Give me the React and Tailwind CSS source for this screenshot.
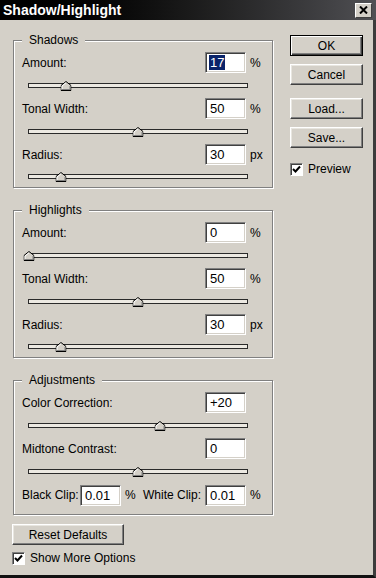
import React from "react";

const font = { fontFamily: '"Liberation Sans", Arial, sans-serif' };

const groups = [
  {
    title: "Shadows",
    rows: [
      { label: "Amount:", value: "17", unit: "%", pos: 17, selected: true },
      { label: "Tonal Width:", value: "50", unit: "%", pos: 50 },
      { label: "Radius:", value: "30", unit: "px", pos: 14.5 },
    ],
  },
  {
    title: "Highlights",
    rows: [
      { label: "Amount:", value: "0", unit: "%", pos: 0 },
      { label: "Tonal Width:", value: "50", unit: "%", pos: 50 },
      { label: "Radius:", value: "30", unit: "px", pos: 14.5 },
    ],
  },
];

const adjustments = [
  { label: "Color Correction:", value: "+20", unit: "", pos: 60 },
  { label: "Midtone Contrast:", value: "0", unit: "", pos: 50 },
];

function Field({ value, selected, width = "w-[41px]" }) {
  return (
    <div
      className={`${width} h-[21px] bg-white border border-t-[#808080] border-l-[#808080] border-b-white border-r-white shadow-[inset_1px_1px_0_#404040,inset_-1px_-1px_0_#d4d0c8] flex items-center pl-[3px] text-[13px] text-black`}>
      {selected ? (
        <span className="bg-[#0a246a] text-white leading-[15px] px-[1px]">
          {value}
        </span>
      ) : (
        <span className="leading-[15px] px-[1px]">{value}</span>
      )}
    </div>
  );
}

function Thumb() {
  return (
    <svg width="11" height="10" viewBox="0 0 11 10">
      <polygon
        points="0.5,9.5 0.5,4.5 5.5,0.5 10.5,4.5 10.5,9.5"
        fill="#d4d0c8"
        stroke="#000"
      />
      <polyline points="1.5,8.5 1.5,5 5.5,1.8" fill="none" stroke="#fff" />
      <polyline points="1.5,8.5 9.5,8.5 9.5,5" fill="none" stroke="#808080" />
    </svg>
  );
}

function Slider({ pos, last }) {
  return (
    <div className={`${last ? "h-[22px]" : "h-[25px]"} flex items-center`}>
      <div className="relative ml-[6px] w-[220px] h-[5px] border border-[#2a2a2a] bg-[#ece9e2]">
        <div
          className="absolute top-[-3px] -translate-x-1/2 flex"
          style={{ left: `${pos}%` }}>
          <Thumb />
        </div>
      </div>
    </div>
  );
}

function Row({ row }) {
  return (
    <div className="h-[21px] flex items-center">
      <span className="flex-1">{row.label}</span>
      <Field value={row.value} selected={row.selected} />
      <span className="w-[26px] pl-[4px]">{row.unit}</span>
    </div>
  );
}

function Group({ title, children, className = "" }) {
  return (
    <fieldset
      className={`w-[260px] border border-[#808080] shadow-[inset_1px_1px_0_#fff,1px_1px_0_#fff] pl-[8px] pt-[5px] ${className}`}>
      <legend className="px-[7px] leading-[14px] bg-[#d4d0c8]">{title}</legend>
      {children}
    </fieldset>
  );
}

function Button({ children, primary, className = "" }) {
  return (
    <div
      className={`h-[21px] flex items-center justify-center border ${
        primary
          ? "border-black shadow-[inset_1px_1px_0_#fff,inset_-1px_-1px_0_#404040,inset_-2px_-2px_0_#808080]"
          : "border-t-white border-l-white border-b-[#404040] border-r-[#404040] shadow-[inset_-1px_-1px_0_#808080,inset_1px_1px_0_#e8e6e0]"
      } ${className}`}>
      {children}
    </div>
  );
}

function CheckBox({ label }) {
  return (
    <div className="flex items-center gap-[5px] h-[14px]">
      <div className="w-[13px] h-[13px] bg-white border border-t-[#808080] border-l-[#808080] border-b-white border-r-white shadow-[inset_1px_1px_0_#404040] flex items-center justify-center">
        <svg width="9" height="9" viewBox="0 0 9 9">
          <path d="M1 4 L3.5 6.5 L8 1.5" fill="none" stroke="#000" strokeWidth="2" />
        </svg>
      </div>
      <span>{label}</span>
    </div>
  );
}

export default function App() {
  return (
    <div className="w-[376px] h-[578px] flex flex-col text-[12px] text-black" style={font}>
      <div className="h-[20px] bg-linear-to-r from-black via-[#1a1a1a] to-[#505054] flex items-center justify-between pl-[3px] pr-[4px]">
        <span className="text-white font-bold text-[14px] leading-none">
          Shadow/Highlight
        </span>
        <div className="w-[17px] h-[15px] bg-[#d4d0c8] border border-t-white border-l-white border-b-[#404040] border-r-[#404040] flex items-center justify-center">
          <svg width="9" height="8" viewBox="0 0 9 8">
            <path d="M1 0.5 L8 7.5 M8 0.5 L1 7.5" stroke="#000" strokeWidth="2" />
          </svg>
        </div>
      </div>

      <div className="flex-1 bg-[#d4d0c8] border-r-[3px] border-r-[#3c3c3c] border-b-[3px] border-b-[#111] flex pl-[13px]">
        <div className="flex flex-col pt-[13px]">
          {groups.map((g, gi) => (
            <Group key={g.title} title={g.title} className={gi > 0 ? "mt-[15px]" : ""}>
              {g.rows.map((r, i) => (
                <div key={i}>
                  <Row row={r} />
                  <Slider pos={r.pos} last={i === g.rows.length - 1} />
                </div>
              ))}
            </Group>
          ))}

          <Group title="Adjustments" className="mt-[15px] pb-[8px]">
            {adjustments.map((r, i) => (
              <div key={i}>
                <Row row={r} />
                <Slider pos={r.pos} />
              </div>
            ))}
            <div className="h-[22px] flex items-center">
              <span className="w-[58px]">Black Clip:</span>
              <Field value="0.01" width="w-[41px]" />
              <span className="w-[22px] pl-[4px]">%</span>
              <span className="w-[62px]">White Clip:</span>
              <Field value="0.01" />
              <span className="w-[26px] pl-[4px]">%</span>
            </div>
          </Group>

          <Button className="w-[112px] mt-[9px] -ml-[1px] h-[20px]">Reset Defaults</Button>
          <div className="mt-[6px] -ml-[1px]">
            <CheckBox label="Show More Options" />
          </div>
        </div>

        <div className="ml-[17px] w-[73px] flex flex-col pt-[15px]">
          <Button primary>OK</Button>
          <Button className="mt-[8px]">Cancel</Button>
          <Button className="mt-[13px]">Load...</Button>
          <Button className="mt-[8px]">Save...</Button>
          <div className="mt-[14px]">
            <CheckBox label="Preview" />
          </div>
        </div>
      </div>
    </div>
  );
}
